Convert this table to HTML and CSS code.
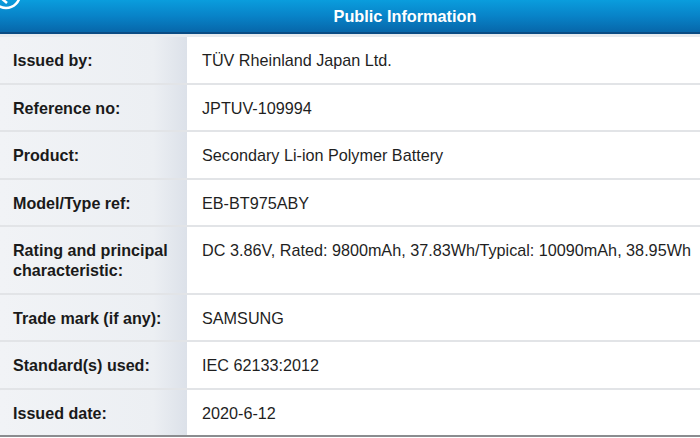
FILE: index.html
```html
<!DOCTYPE html>
<html>
<head>
<meta charset="utf-8">
<link rel="stylesheet" href="styles.css">
</head>
<body>
<div class="page">
  <div class="header">
    <svg class="back" width="40" height="30" viewBox="0 0 40 30"><circle cx="6" cy="-6" r="14" fill="none" stroke="#ffffff" stroke-width="2.5"/><path d="M1 -2 L7 3" stroke="#ffffff" stroke-width="2.5" fill="none"/></svg>
    <span class="title">Public Information</span>
  </div>
  <div class="table">
    <div class="row"><div class="label">Issued by:</div><div class="value">TÜV Rheinland Japan Ltd.</div></div>
    <div class="row"><div class="label">Reference no:</div><div class="value">JPTUV-109994</div></div>
    <div class="row"><div class="label">Product:</div><div class="value">Secondary Li-ion Polymer Battery</div></div>
    <div class="row"><div class="label">Model/Type ref:</div><div class="value">EB-BT975ABY</div></div>
    <div class="row tall"><div class="label">Rating and principal characteristic:</div><div class="value">DC 3.86V, Rated: 9800mAh, 37.83Wh/Typical: 10090mAh, 38.95Wh</div></div>
    <div class="row"><div class="label">Trade mark (if any):</div><div class="value">SAMSUNG</div></div>
    <div class="row"><div class="label">Standard(s) used:</div><div class="value">IEC 62133:2012</div></div>
    <div class="row last"><div class="label">Issued date:</div><div class="value">2020-6-12</div></div>
  </div>
</div>
</body>
</html>
```
FILE: styles.css
```css
html, body {
  margin: 0;
  padding: 0;
  background: #ffffff;
}
.page {
  width: 700px;
  height: 438px;
  overflow: hidden;
  font-family: "Liberation Sans", Arial, sans-serif;
  background: #ffffff;
}
.header {
  position: relative;
  height: 32px;
  background: linear-gradient(to bottom, #0a9ddd 0%, #0883c8 50%, #0767aa 100%);
  border-bottom: 2px solid #0a4c84;
  display: flex;
  align-items: center;
  justify-content: center;
  padding-left: 110px;
}
.back {
  position: absolute;
  left: 0;
  top: 0;
}
.title {
  color: #ffffff;
  font-weight: bold;
  font-size: 16.3px;
}
.table {
  border-top: 3px solid #e7ebef;
}
.row {
  display: flex;
  border-bottom: 2px solid #e2e4e7;
}
.row.last {
  border-bottom: 2px solid #8a8c8f;
}
.label {
  width: 174px;
  flex: none;
  padding: 13px 0 12.5px 13px;
  font-weight: bold;
  font-size: 16.1px;
  line-height: 20px;
  color: #1a1a1a;
  background: linear-gradient(to right, #f1f3f6 0%, #eceff3 82%, #dce1e9 100%);
}
.value {
  flex: 1;
  padding: 13px 0 12.5px 15px;
  font-size: 16.2px;
  line-height: 20px;
  color: #1f1f1f;
}
.row.tall .label,
.row.tall .value {
  padding-bottom: 12.5px;
}
```
